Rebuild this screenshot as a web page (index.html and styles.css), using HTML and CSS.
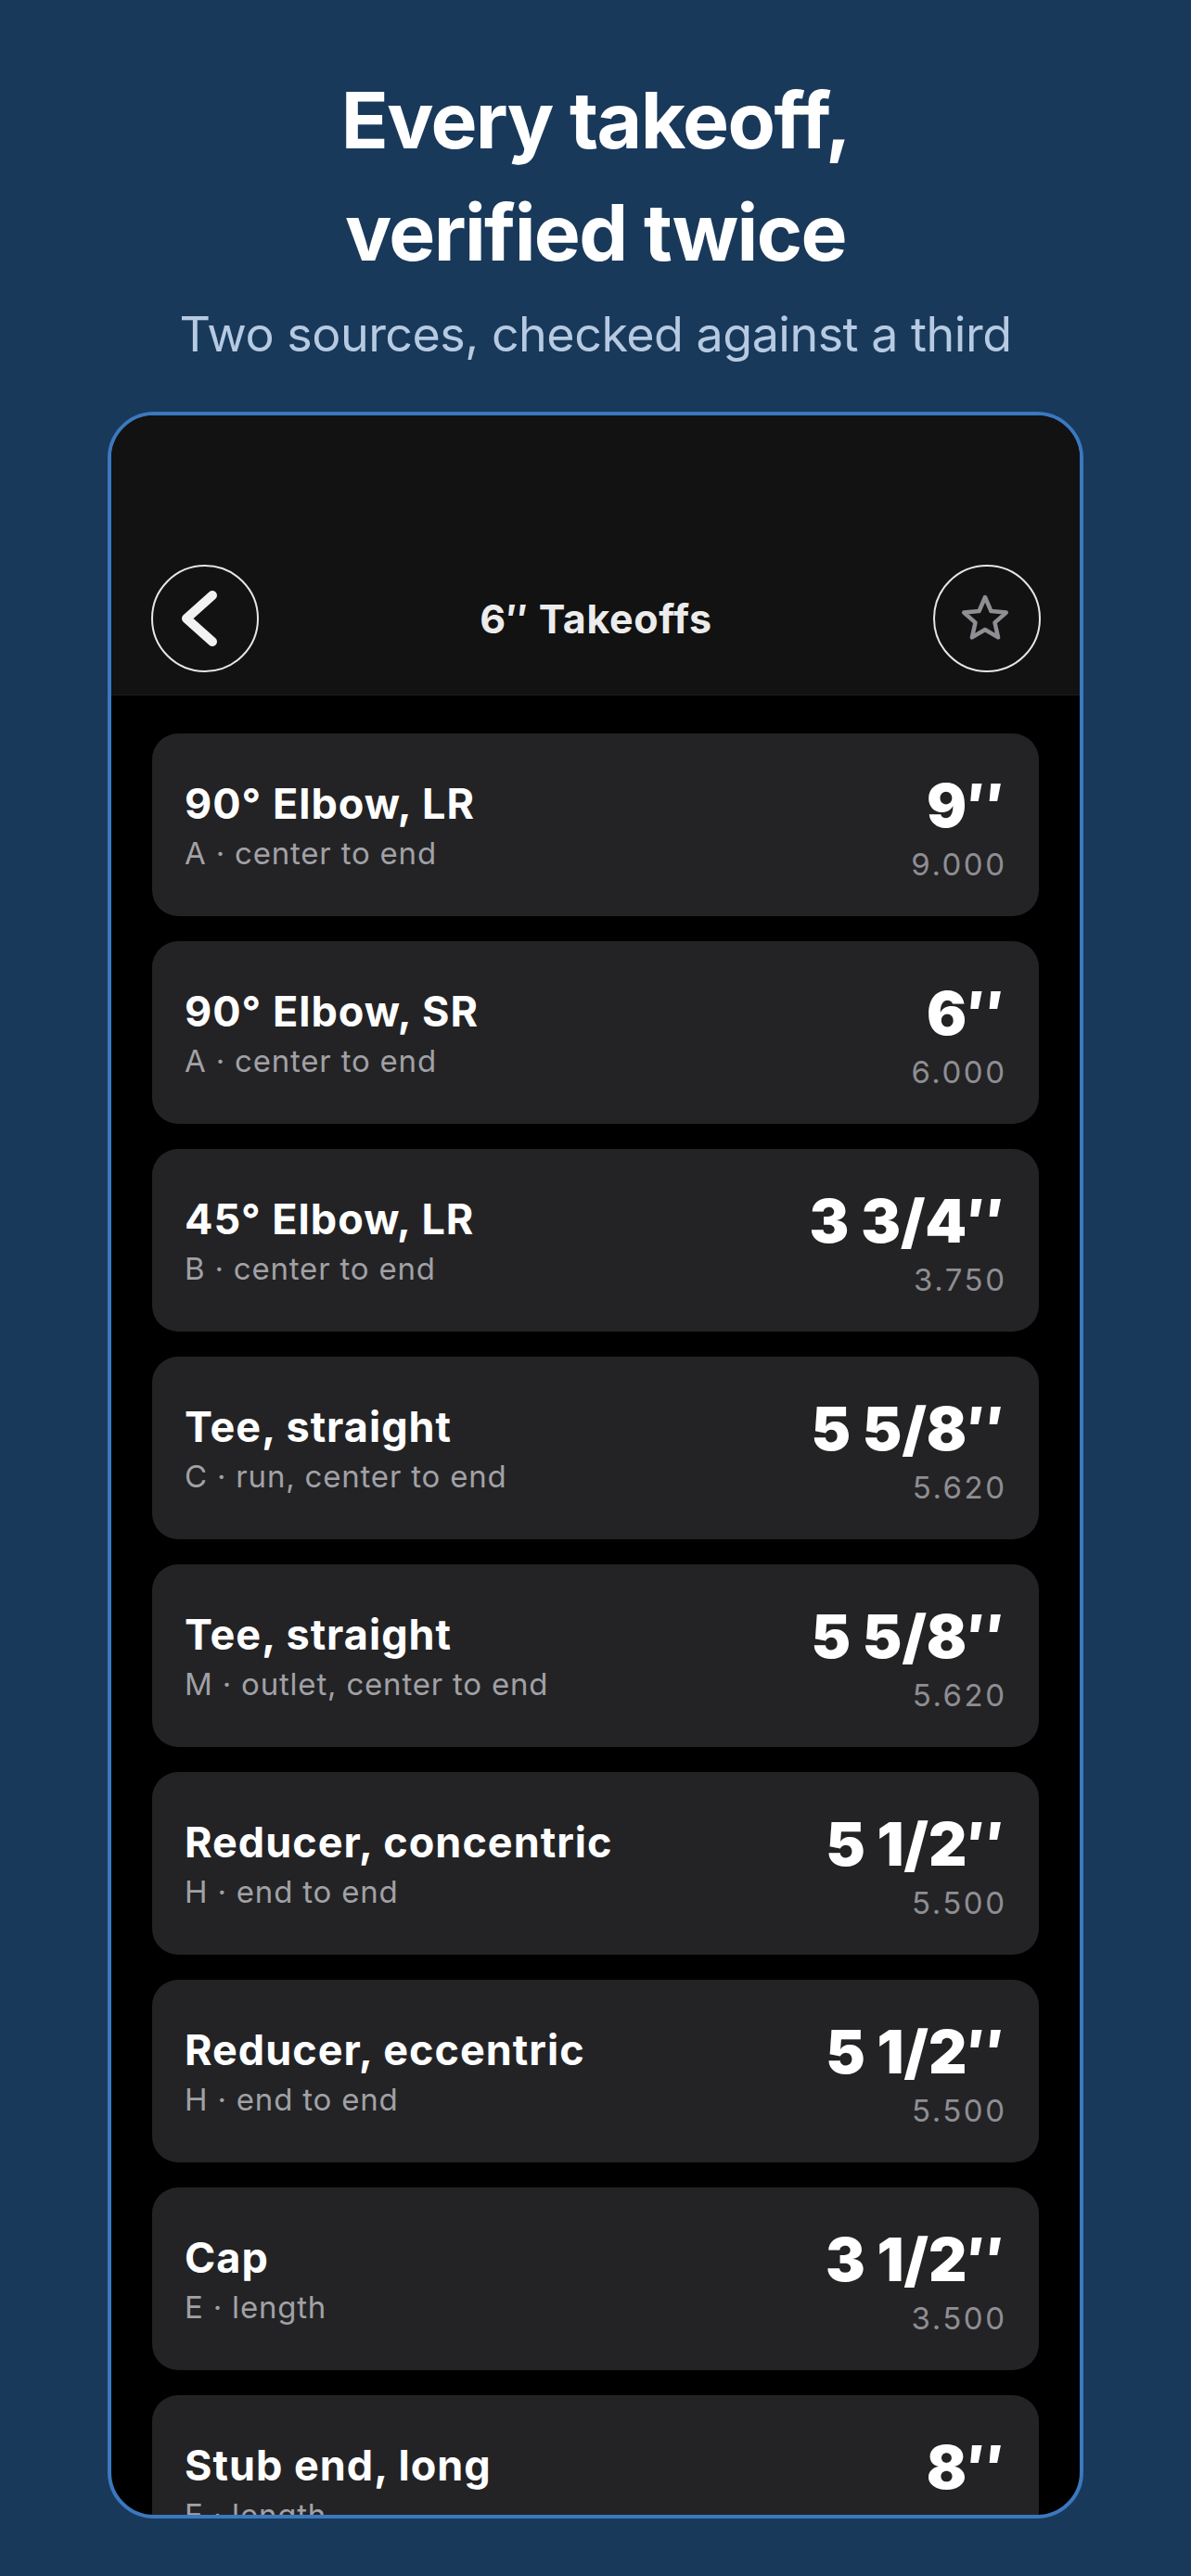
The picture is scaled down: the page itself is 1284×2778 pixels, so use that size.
FILE: index.html
```html
<!DOCTYPE html>
<html lang="en">
<head>
<meta charset="utf-8">
<title>6″ Takeoffs</title>
<link rel="stylesheet" href="styles.css">
</head>
<body>
<header class="hero">
  <h1 class="hero-title">Every takeoff,<br>verified twice</h1>
  <p class="hero-sub">Two sources, checked against a third</p>
</header>
<main class="phone">
  <nav class="nav">
    <div class="nav-btn">
      <svg width="112" height="112" viewBox="0 0 112 112"><path d="M64 31 L36 56 L64 81" fill="none" stroke="#f2f2f2" stroke-width="10" stroke-linecap="round" stroke-linejoin="round"/></svg>
    </div>
    <div class="nav-title">6″ Takeoffs</div>
    <div class="nav-btn">
      <svg width="112" height="112" viewBox="0 0 112 112"><path d="M54 33 L60.5 48.1 L76.8 49.6 L64.5 60.4 L68.1 76.4 L54 68 L39.9 76.4 L43.5 60.4 L31.2 49.6 L47.5 48.1 Z" fill="none" stroke="#8e8e93" stroke-width="4.5" stroke-linejoin="round"/></svg>
    </div>
  </nav>
  <section class="list">
    <div class="card"><div class="info"><div class="name">90° Elbow, LR</div><div class="meta">A · center to end</div></div><div class="val"><div class="frac">9″</div><div class="dec">9.000</div></div></div>
    <div class="card"><div class="info"><div class="name">90° Elbow, SR</div><div class="meta">A · center to end</div></div><div class="val"><div class="frac">6″</div><div class="dec">6.000</div></div></div>
    <div class="card"><div class="info"><div class="name">45° Elbow, LR</div><div class="meta">B · center to end</div></div><div class="val"><div class="frac">3 3/4″</div><div class="dec">3.750</div></div></div>
    <div class="card"><div class="info"><div class="name">Tee, straight</div><div class="meta">C · run, center to end</div></div><div class="val"><div class="frac">5 5/8″</div><div class="dec">5.620</div></div></div>
    <div class="card"><div class="info"><div class="name">Tee, straight</div><div class="meta">M · outlet, center to end</div></div><div class="val"><div class="frac">5 5/8″</div><div class="dec">5.620</div></div></div>
    <div class="card"><div class="info"><div class="name">Reducer, concentric</div><div class="meta">H · end to end</div></div><div class="val"><div class="frac">5 1/2″</div><div class="dec">5.500</div></div></div>
    <div class="card"><div class="info"><div class="name">Reducer, eccentric</div><div class="meta">H · end to end</div></div><div class="val"><div class="frac">5 1/2″</div><div class="dec">5.500</div></div></div>
    <div class="card"><div class="info"><div class="name">Cap</div><div class="meta">E · length</div></div><div class="val"><div class="frac">3 1/2″</div><div class="dec">3.500</div></div></div>
    <div class="card"><div class="info"><div class="name">Stub end, long</div><div class="meta">E · length</div></div><div class="val"><div class="frac">8″</div><div class="dec">8.000</div></div></div>
  </section>
</main>
</body>
</html>
```

FILE: styles.css
```css
* { box-sizing: border-box; }
html, body { margin: 0; padding: 0; }
body {
  background: #19395b;
  font-family: Inter, "Noto Sans", "Liberation Sans", sans-serif;
  width: 1284px;
  height: 2778px;
  overflow: hidden;
}
.hero {
  display: flex;
  flex-direction: column;
  align-items: center;
  padding-top: 69px;
}
.hero-title {
  margin: 0;
  color: #ffffff;
  font-size: 84px;
  line-height: 121px;
  font-weight: 700;
  text-align: center;
  letter-spacing: -1.6px;
}
.hero-sub {
  margin: 19px 0 0;
  color: #b6cae2;
  font-size: 52px;
  line-height: 62px;
  font-weight: 400;
  letter-spacing: -0.5px;
}
.phone {
  width: 1052px;
  height: 2272px;
  margin: 52px auto 0;
  border: 4px solid #3b78bf;
  border-radius: 50px;
  overflow: hidden;
  background: #000;
  display: flex;
  flex-direction: column;
}
.nav {
  background: #121212;
  height: 302px;
  flex: none;
  display: flex;
  align-items: center;
  justify-content: space-between;
  padding: 162px 42px 26px 43px;
  border-bottom: 1px solid #1e1e1e;
}
.nav-btn {
  width: 116px;
  height: 116px;
  border-radius: 50%;
  border: 2px solid #e6e6e6;
  display: flex;
  align-items: center;
  justify-content: center;
  flex: none;
}
.nav-title {
  flex: 1;
  text-align: center;
  color: #ececec;
  font-size: 43px;
  font-weight: 700;
  letter-spacing: 0.6px;
}
.list {
  display: flex;
  flex-direction: column;
  gap: 27px;
  padding: 41px 44px 0;
}
.card {
  flex: none;
  height: 197px;
  background: #232325;
  border-radius: 28px;
  display: flex;
  align-items: center;
  justify-content: space-between;
  padding: 0 37px 0 35px;
}
.info {
  display: flex;
  flex-direction: column;
  gap: 8px;
}
.name {
  color: #ffffff;
  font-size: 45px;
  line-height: 53px;
  font-weight: 700;
  letter-spacing: 1px;
}
.meta {
  color: #a1a1a6;
  font-size: 33px;
  line-height: 38px;
  font-weight: 400;
  letter-spacing: 0.8px;
}
.val {
  display: flex;
  flex-direction: column;
  align-items: flex-end;
  gap: 9px;
  padding-top: 6px;
}
.frac {
  color: #ffffff;
  font-size: 64px;
  line-height: 70px;
  font-weight: 900;
}
.dec {
  color: #8e8e93;
  font-size: 33px;
  line-height: 38px;
  font-weight: 400;
  letter-spacing: 2.5px;
  margin-right: -2.5px;
}
```
